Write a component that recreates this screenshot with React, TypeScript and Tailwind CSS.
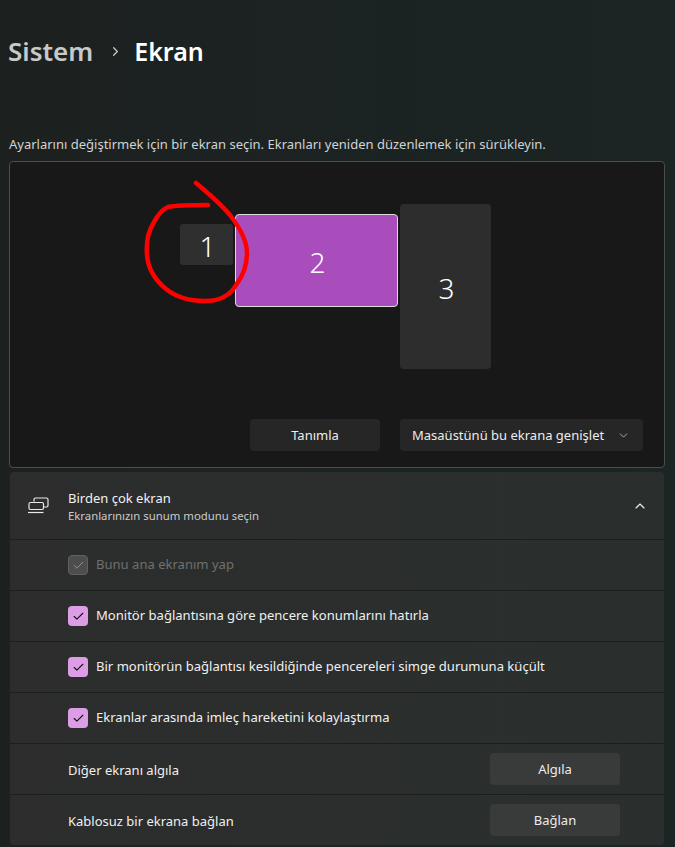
import React from 'react';
import { ChevronDown, ChevronRight, ChevronUp, Check } from 'lucide-react';

const checks = [
  { label: 'Bunu ana ekranım yap', disabled: true },
  { label: 'Monitör bağlantısına göre pencere konumlarını hatırla' },
  { label: 'Bir monitörün bağlantısı kesildiğinde pencereleri simge durumuna küçült' },
  { label: 'Ekranlar arasında imleç hareketini kolaylaştırma' },
];

const actions = [
  { label: 'Diğer ekranı algıla', button: 'Algıla' },
  { label: 'Kablosuz bir ekrana bağlan', button: 'Bağlan' },
];

function CheckRow({ label, disabled }: { label: string; disabled?: boolean }) {
  return (
    <div className="h-[51px] border-t border-[#1d1f1f] flex items-center pl-[58px] gap-2">
      {disabled ? (
        <span className="w-5 h-5 rounded-[4px] bg-[#4c4d4c] border border-[#5f605f] flex items-center justify-center">
          <Check size={13} strokeWidth={1.5} className="text-[#a3a3a3]" />
        </span>
      ) : (
        <span className="w-5 h-5 rounded-[4px] bg-[#dc9de6] flex items-center justify-center">
          <Check size={13} strokeWidth={2} className="text-[#111]" />
        </span>
      )}
      <span className={disabled ? 'text-[#6f706f] text-[13.05px]' : 'text-[#f0f0f0] text-[13.05px]'}>{label}</span>
    </div>
  );
}

export default function App() {
  return (
    <div className="relative w-[675px] h-[847px] overflow-hidden bg-gradient-to-r from-[#1c2120] to-[#1b2524] text-[13px] text-white font-['Noto_Sans',sans-serif]">
      {/* Breadcrumb */}
      <div className="h-[103px] flex items-center pl-2 pb-[1px] text-[26px] leading-none font-semibold">
        <span className="text-[#c8c9c9]">Sistem</span>
        <ChevronRight size={15} strokeWidth={2} className="ml-[15px] mr-[11px] text-[#c8c9c9]" />
        <span className="text-[25px]">Ekran</span>
      </div>

      <p className="mt-[32px] pl-[9px] h-[26px] text-[#d2d3d3]">
        Ayarlarını değiştirmek için bir ekran seçin. Ekranları yeniden düzenlemek için sürükleyin.
      </p>

      {/* Display arrangement */}
      <div className="relative ml-[9px] w-[656px] h-[307px] rounded-[4px] bg-[#181818] border border-[#4b4e4d]">
        <div className="absolute left-[170px] top-[62px] w-[53px] h-[41px] pl-[2px] pt-[2px] rounded-[3px] bg-[#2f2f2f] flex items-center justify-center text-[28px] font-light">
          1
        </div>
        <div className="absolute left-[225px] top-[52px] w-[163px] h-[93px] pl-[2px] pt-[2px] rounded-[4px] bg-[#a94dbd] border border-[#dcdcdc] flex items-center justify-center text-[28px] font-light">
          2
        </div>
        <div className="absolute left-[390px] top-[42px] w-[91px] h-[165px] pl-[2px] pt-[3px] rounded-[4px] bg-[#2d2d2d] flex items-center justify-center text-[28px] font-light">
          3
        </div>
        <div className="absolute left-[240px] top-[257px] flex gap-5">
          <button className="w-[130px] h-8 pt-[2px] rounded-[4px] bg-[#262626] text-[#ececec]">Tanımla</button>
          <button className="w-[243px] h-8 rounded-[4px] bg-[#262626] text-[#ececec] flex items-center justify-between pl-3 pr-[13px]">
            <span className="pt-[2px]">Masaüstünü bu ekrana genişlet</span>
            <ChevronDown size={13} strokeWidth={1.5} className="text-[#c4c4c4]" />
          </button>
        </div>
      </div>

      {/* Multiple displays card */}
      <div className="ml-[10px] mt-1 w-[654px] h-[373px] rounded-[4px] bg-gradient-to-r from-[#2c2d2c] to-[#2a2f2e] overflow-hidden">
        <div className="h-[67px] flex items-center pl-[18px] pr-4">
          <svg width="21" height="17" viewBox="0 0 21 17" fill="none" stroke="#eaeaea" strokeWidth="1.2">
            <path d="M6 4.5V2.5a1.5 1.5 0 0 1 1.5-1.5h11a1.5 1.5 0 0 1 1.5 1.5v6a1.5 1.5 0 0 1-1.5 1.5H15.5" />
            <rect x="1" y="5.5" width="14.5" height="7" rx="1.5" />
            <path d="M0 15.5h15.5" />
          </svg>
          <div className="ml-[19px] flex-1 pt-[2px]">
            <div className="text-[#f2f2f2] leading-[18px]">Birden çok ekran</div>
            <div className="text-[11.35px] leading-[17px] text-[#c9caca]">Ekranlarınızın sunum modunu seçin</div>
          </div>
          <ChevronUp size={16} strokeWidth={1.75} className="text-[#eeeeee]" />
        </div>
        {checks.map((c) => (
          <CheckRow key={c.label} label={c.label} disabled={c.disabled} />
        ))}
        {actions.map((a) => (
          <div key={a.label} className="h-[51px] border-t border-[#1d1f1f] flex items-center justify-between pl-[58px] pr-[44px]">
            <span className="text-[#f0f0f0] pt-1">{a.label}</span>
            <button className="w-[130px] h-8 pt-[2px] rounded-[4px] bg-[#393b3a] text-[#ececec]">{a.button}</button>
          </div>
        ))}
      </div>

      {/* Red marker circle drawn on the screenshot */}
      <svg className="absolute left-0 top-0 pointer-events-none" width="675" height="847" fill="none">
        <path
          d="M196 183C208 193 220 203 230 215C240 228 247 240 247 253C247 265 243 276 236 285C230 296 218 301 205 301C190 301 176 297 166 289C155 280 148 268 147 255C146 242 148 232 153 224C157 216 161 210 168 207C178 205 195 205 208 205"
          stroke="#ff0000"
          strokeWidth="4.5"
          strokeLinecap="round"
        />
      </svg>
    </div>
  );
}
